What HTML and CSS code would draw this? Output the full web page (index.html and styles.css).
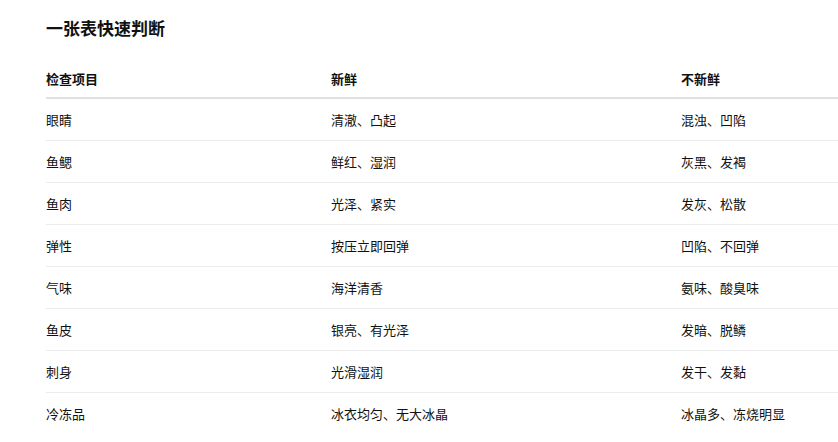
FILE: index.html
```html
<!DOCTYPE html>
<html lang="zh-CN">
<head>
<meta charset="utf-8">
<title>一张表快速判断</title>
<link rel="stylesheet" href="styles.css">
</head>
<body>
<div class="page">
  <h3 class="title">一张表快速判断</h3>
  <table class="judge">
    <thead>
      <tr><th class="c1">检查项目</th><th class="c2">新鲜</th><th class="c3">不新鲜</th></tr>
    </thead>
    <tbody>
      <tr><td>眼睛</td><td>清澈、凸起</td><td>混浊、凹陷</td></tr>
      <tr><td>鱼鳃</td><td>鲜红、湿润</td><td>灰黑、发褐</td></tr>
      <tr><td>鱼肉</td><td>光泽、紧实</td><td>发灰、松散</td></tr>
      <tr><td>弹性</td><td>按压立即回弹</td><td>凹陷、不回弹</td></tr>
      <tr><td>气味</td><td>海洋清香</td><td>氨味、酸臭味</td></tr>
      <tr><td>鱼皮</td><td>银亮、有光泽</td><td>发暗、脱鳞</td></tr>
      <tr><td>刺身</td><td>光滑湿润</td><td>发干、发黏</td></tr>
      <tr><td>冷冻品</td><td>冰衣均匀、无大冰晶</td><td>冰晶多、冻烧明显</td></tr>
    </tbody>
  </table>
</div>
</body>
</html>
```

FILE: styles.css
```css
html, body {
  margin: 0;
  padding: 0;
  background: #ffffff;
}
body {
  font-family: "Noto Sans CJK SC", "Noto Sans", sans-serif;
  color: #111111;
}
.page {
  padding: 16px 0 0 46px;
  overflow: hidden;
}
.title {
  margin: 0 0 16px 0;
  font-size: 17px;
  line-height: 24px;
  font-weight: 700;
  color: #111111;
}
.judge {
  width: 792px;
  border-collapse: collapse;
  font-size: 13px;
  line-height: 17px;
}
.judge th {
  text-align: left;
  font-weight: 700;
  padding: 14px 0 10px 0;
  border-bottom: 2px solid #e0e0e0;
  color: #111111;
}
.judge td {
  padding: 12px 0;
  border-bottom: 1px solid #ececec;
}
.judge tbody tr:last-child td {
  border-bottom: none;
}
.c1 { width: 285px; }
.c2 { width: 350px; }
```
